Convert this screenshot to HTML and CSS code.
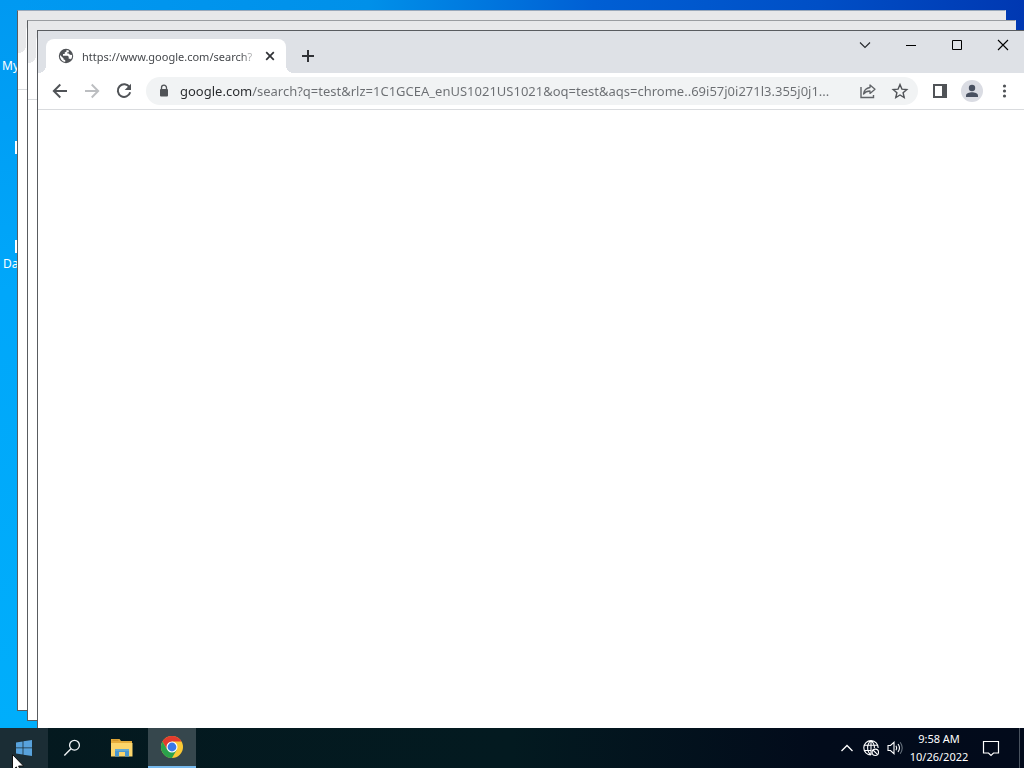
FILE: index.html
```html
<!DOCTYPE html>
<html lang="en">
<head>
<meta charset="utf-8">
<title>Desktop</title>
<link rel="stylesheet" href="styles.css">
</head>
<body>
<main class="desktop">
  <div class="shortcut shortcut-pc">My</div>
  <div class="sliver sliver-first"></div>
  <div class="sliver sliver-second"></div>
  <div class="shortcut shortcut-data">Da</div>

  <section class="window window-back">
    <div class="tab-strip"><div class="tab"></div></div>
    <div class="toolbar"></div>
  </section>
  <section class="window window-middle">
    <div class="tab-strip"><div class="tab"></div></div>
    <div class="toolbar"></div>
  </section>
  <section class="window window-front">
    <header class="tab-strip">
      <div class="tab">
        <svg class="favicon" width="16" height="16" viewBox="0 0 16 16"><circle cx="8" cy="8" r="7.2" fill="#505357"/><path d="M2 7l3.600 3.400v1L7.200 12v2A6 6 0 0 1 2 7zM8.500 1.900v1.500L6.700 4.500v1.600H5v1.700h4.700l1 1v1.900h1.600l.7.8A6.200 6.200 0 0 0 14.100 7l-2.200-.3-1.200-1.200H9.300V4.200h1.500V2.600A7 7 0 0 0 8.500 1.900z" fill="#fff"/></svg>
        <span class="tab-title">https://www.google.com/search?</span>
        <button class="tab-close" aria-label="Close tab"><svg width="16" height="16" viewBox="0 0 16 16"><path d="M4.200 4.200l7.600 7.600M11.800 4.200l-7.600 7.600" stroke="#303236" stroke-width="1.700"/></svg></button>
      </div>
      <button class="new-tab" aria-label="New tab"><svg width="16" height="16" viewBox="0 0 16 16"><path d="M8 2v12M2 8h12" stroke="#303236" stroke-width="2"/></svg></button>
      <div class="captions">
        <button class="caption" aria-label="Search tabs"><svg width="16" height="16" viewBox="0 0 16 16"><path d="M3 5.500l5 5 5-5" fill="none" stroke="#24262a" stroke-width="1.100"/></svg></button>
        <button class="caption" aria-label="Minimize"><svg width="16" height="16" viewBox="0 0 16 16"><path d="M3 8.500h10" stroke="#000"/></svg></button>
        <button class="caption" aria-label="Maximize"><svg width="16" height="16" viewBox="0 0 16 16"><path d="M3.500 3.500h9v9h-9z" fill="none" stroke="#000"/></svg></button>
        <button class="caption" aria-label="Close"><svg width="16" height="16" viewBox="0 0 16 16"><path d="M3 3l10 10M13 3L3 13" stroke="#000" stroke-width="1.100"/></svg></button>
      </div>
    </header>
    <div class="toolbar">
      <div class="tools">
        <button class="tool" aria-label="Back"><svg width="18" height="18" viewBox="0 0 18 18"><path d="M16 9H3M9.300 2.500L2.800 9l6.500 6.500" fill="none" stroke="#505357" stroke-width="1.900"/></svg></button>
        <button class="tool" aria-label="Forward"><svg width="18" height="18" viewBox="0 0 18 18"><path d="M2 9h13M8.700 2.500L15.200 9l-6.500 6.500" fill="none" stroke="#bcbec1" stroke-width="1.900"/></svg></button>
        <button class="tool" aria-label="Reload"><svg width="18" height="18" viewBox="0 0 18 18"><path d="M14.500 5.300A6.300 6.300 0 1 0 15.200 10.200" fill="none" stroke="#505357" stroke-width="2"/><path d="M16 1.800v6.300H9.700z" fill="#505357"/></svg></button>
      </div>
      <div class="omnibox">
        <svg class="lock" width="16" height="16" viewBox="0 0 16 16"><path d="M5.500 7V4.700a2.500 2.500 0 0 1 5 0V7" fill="none" stroke="#505357" stroke-width="1.300"/><rect x="4" y="6" width="8" height="7.500" rx="1" fill="#505357"/></svg>
        <input class="address" type="text" aria-label="Address and search bar" value="google.com/search?q=test&amp;rlz=1C1GCEA_enUS1021US1021&amp;oq=test&amp;aqs=chrome..69i57j0i271l3.355j0j1...">
        <div class="tools">
          <button class="tool" aria-label="Share this page"><svg width="18" height="18" viewBox="0 0 18 18"><path d="M2 5v10.500h12.500V13" fill="none" stroke="#606367" stroke-width="1.400"/><path d="M11 3l5 4.200-5 4.200V9C8 9 6 10 4.500 12 5 8.500 7.200 6 11 5.500z" fill="none" stroke="#606367" stroke-width="1.300" stroke-linejoin="round"/></svg></button>
          <button class="tool" aria-label="Bookmark this tab"><svg width="18" height="18" viewBox="0 0 18 18"><path d="M9 2.600l1.900 4.500 4.900.4-3.700 3.200 1.100 4.800L9 13l-4.200 2.500 1.100-4.800-3.700-3.200 4.900-.4z" fill="none" stroke="#505357" stroke-width="1.400"/></svg></button>
        </div>
      </div>
      <div class="tools">
        <button class="tool" aria-label="Side panel"><svg width="16" height="16" viewBox="0 0 16 16"><path d="M1 1h14v14H1zM3 3v10h7V3z" fill="#505357" fill-rule="evenodd"/></svg></button>
        <button class="tool" aria-label="Profile"><svg width="22" height="22" viewBox="0 0 22 22"><circle cx="11" cy="11" r="11" fill="#dadce3"/><circle cx="11" cy="8" r="3.200" fill="#485060"/><path d="M5 17v-1.500c0-2.300 3.500-3.200 6-3.200s6 .9 6 3.200V17z" fill="#485060"/></svg></button>
        <button class="tool" aria-label="Menu"><svg width="16" height="16" viewBox="0 0 16 16"><g fill="#505357"><circle cx="8.500" cy="3" r="1.600"/><circle cx="8.500" cy="8" r="1.600"/><circle cx="8.500" cy="13" r="1.600"/></g></svg></button>
      </div>
    </div>
  </section>
</main>

<footer class="taskbar">
  <div class="apps">
    <button class="app app-start" aria-label="Start"><svg width="16" height="16" viewBox="0 0 16 16"><path d="M0 2.400L6.600 1.400V7.500H0zM7.400 1.300L16 0v7.500H7.400zM0 8.300h6.600v6.200L0 13.600zM7.400 8.300H16V16l-8.600-1.300z" fill="#58a2dc"/></svg></button>
    <button class="app" aria-label="Search"><svg width="18" height="18" viewBox="0 0 18 18"><circle cx="11.500" cy="6.200" r="4.900" fill="none" stroke="#f0f4f6" stroke-width="1.300"/><path d="M8 9.800L1.300 16.500" stroke="#f0f4f6" stroke-width="1.400"/></svg></button>
  </div>
  <button class="app" aria-label="File Explorer"><svg width="22" height="20" viewBox="0 0 22 20"><path d="M0 1h8.500l1.500 2h11v15H0z" fill="#e5ad3c"/><path d="M0 5h21.500v13.500H0z" fill="#fbd56b"/><path d="M1.500 2.200h6" stroke="#c78b27"/><path d="M4 11h14v7.500h-4V14H8v4.500H4z" fill="#4a98cf"/><path d="M4 11h14v2H4z" fill="#64a9cf"/></svg></button>
  <button class="app app-active" aria-label="Google Chrome"><svg width="24" height="24" viewBox="0 0 24 24"><circle cx="12" cy="12" r="11" fill="#fcc934"/><path d="M12 12V6.500h9.530A11 11 0 0 0 2.470 6.500L7.240 14.750z" fill="#e33b2e"/><path d="M2.470 6.500A11 11 0 0 0 12 23l4.760-8.250L12 12l-4.760 2.750z" fill="#2ba24c"/><circle cx="12" cy="12" r="5.500" fill="#fff"/><circle cx="12" cy="12" r="4.400" fill="#3b78e7"/></svg></button>
  <div class="tray">
    <button class="tray-icon" aria-label="Show hidden icons"><svg width="16" height="16" viewBox="0 0 16 16"><path d="M2.500 11L8 5.500l5.500 5.500" fill="none" stroke="#fff" stroke-width="1.300"/></svg></button>
    <button class="tray-icon" aria-label="Network"><svg width="18" height="18" viewBox="0 0 18 18"><g fill="none" stroke="#fff" stroke-width="1.100"><path d="M9 16A7.200 7.200 0 1 1 16.200 9M9 16C4.500 12.500 4.500 5 9 1.600c2.500 2 3.500 4.500 3.400 7.400M2 6.200h14M2 11.500h7M9 1.600V16"/><circle cx="13.300" cy="13.300" r="3.200"/><path d="M11 11l4.600 4.600"/></g></svg></button>
    <button class="tray-icon" aria-label="Volume"><svg width="18" height="18" viewBox="0 0 18 18"><g fill="none" stroke="#fff" stroke-width="1.100"><path d="M2 6.500h2.500L8 3.300v11.400l-3.500-3.200H2z"/><path d="M10 6.800q1.500 2.200 0 4.400M12 5q3 4 0 8"/><path d="M14.200 3.300q4 5.700 0 11.400" stroke="#66717c"/></g></svg></button>
    <button class="clock"><span>9:58 AM</span><span>10/26/2022</span></button>
    <button class="notifications" aria-label="Notifications"><svg width="18" height="18" viewBox="0 0 18 18"><path d="M1.500 2.500h15v11.500h-5L9 16.500 6.500 14h-5z" fill="none" stroke="#fff" stroke-width="1.200"/></svg></button>
    <button class="show-desktop" aria-label="Show desktop"></button>
  </div>
</footer>

<svg class="pointer" width="12" height="19" viewBox="0 0 12 19"><path d="M.5.500v16l3.800-3.600 2.500 5.600 2.300-1-2.500-5.500h5z" fill="#fff" stroke="#111"/></svg>
</body>
</html>
```
FILE: styles.css
```css
* {
  box-sizing: border-box;
}

body {
  margin: 0;
  height: 100vh;
  display: flex;
  flex-direction: column;
  overflow: hidden;
  font-family: "Noto Sans", "Open Sans", sans-serif;
  font-size: 11px;
}

button {
  display: flex;
  align-items: center;
  justify-content: center;
  padding: 0;
  border: 0;
  background: none;
  color: inherit;
  font: inherit;
}

svg {
  display: block;
  flex: none;
}

.desktop {
  position: relative;
  flex: 1;
  overflow: hidden;
  background:
    linear-gradient(90deg, #009df500 0 2%, #0096ef 12%, #0090e9 36%, #005fd4 58%, #004fc6 80%, #0038b2 100%) top / 100% 32px no-repeat,
    linear-gradient(#0099f1, #00a7fa 40%, #00aefb);
}

.shortcut {
  position: absolute;
  color: #fff;
  font-size: 12px;
  line-height: 16px;
}

.shortcut-pc {
  left: 2px;
  top: 58px;
}

.shortcut-data {
  left: 3px;
  top: 256px;
}

.sliver {
  position: absolute;
  left: 15px;
  width: 4px;
  height: 13px;
  background: #fff;
}

.sliver-first {
  top: 141px;
}

.sliver-second {
  top: 240px;
}

.window {
  position: absolute;
  border: 1px solid #595c60;
  background: #fff;
}

.window-back {
  inset: 10px 18px 17px 17px;
  border-top-color: #9aa9bb;
  border-right-color: #e9eaec;
}

.window-middle {
  inset: 20px 8px 7px 27px;
  border-top-color: #9a9da1;
  border-right-color: #e6e7e9;
}

.window-front {
  inset: 30px -3px -3px 37px;
}

.tab-strip {
  display: flex;
  height: 42px;
  padding: 8px 0 0 8px;
  background: #dee1e6;
}

.window-back .tab-strip,
.window-middle .tab-strip {
  padding-top: 12px;
  background: #e7e8ea;
}

.tab {
  position: relative;
  display: flex;
  align-items: center;
  width: 240px;
  padding: 0 8px 0 12px;
  border-radius: 8px 8px 0 0;
  background: #fff;
}

.tab::before,
.tab::after {
  content: "";
  position: absolute;
  bottom: 0;
  width: 8px;
  height: 8px;
}

.tab::before {
  right: 100%;
  background: radial-gradient(circle at 0 0, transparent 8px, #fff 8px);
}

.tab::after {
  left: 100%;
  background: radial-gradient(circle at 100% 0, transparent 8px, #fff 8px);
}

.tab-title {
  flex: 1;
  min-width: 0;
  margin: 0 4px 0 8px;
  overflow: hidden;
  white-space: nowrap;
  color: #45484c;
  mask-image: linear-gradient(90deg, #000 90%, transparent);
}

.tab-close {
  width: 16px;
  height: 16px;
}

.new-tab {
  width: 28px;
  height: 34px;
  margin-left: 8px;
}

.captions {
  display: flex;
  margin: -8px 0 0 auto;
}

.caption {
  width: 46px;
  height: 28px;
}

.toolbar {
  display: flex;
  align-items: center;
  gap: 8px;
  height: 37px;
  padding: 0 8px;
  border-bottom: 1px solid #d9dbde;
}

.tools {
  display: flex;
  gap: 4px;
}

.tool {
  width: 28px;
  height: 28px;
}

.omnibox {
  flex: 1;
  min-width: 0;
  display: flex;
  align-items: center;
  height: 28px;
  padding: 0 4px 0 10px;
  border-radius: 14px;
  background: #f1f3f4;
}

/* The host name is darker than the rest of the address. */
.address {
  flex: 1;
  min-width: 0;
  height: 28px;
  margin-left: 8px;
  padding: 0;
  border: 0;
  outline: 0;
  background: linear-gradient(90deg, #292b2e 72px, #6b6e72 72px);
  background-clip: text;
  color: transparent;
  font: inherit;
  font-size: 13px;
}

.taskbar {
  display: flex;
  gap: 2px;
  height: 40px;
  background: linear-gradient(90deg, #04191f, #031a20 50%, #020b1b 80%, #020a1b);
  color: #fff;
}

.apps {
  display: flex;
}

.app {
  width: 48px;
}

.app-start {
  background: #1b2d35;
}

.app-active {
  border-bottom: 2px solid #76b9ed;
  background: #36474d;
}

.tray {
  display: flex;
  margin-left: auto;
}

.tray-icon {
  width: 24px;
}

.clock {
  flex-direction: column;
  width: 64px;
  line-height: 18px;
}

.notifications {
  width: 40px;
}

.show-desktop {
  width: 5px;
  margin-left: 8px;
  border-left: 1px solid #49525f;
}

.pointer {
  position: absolute;
  left: 12px;
  top: 754px;
}
```
